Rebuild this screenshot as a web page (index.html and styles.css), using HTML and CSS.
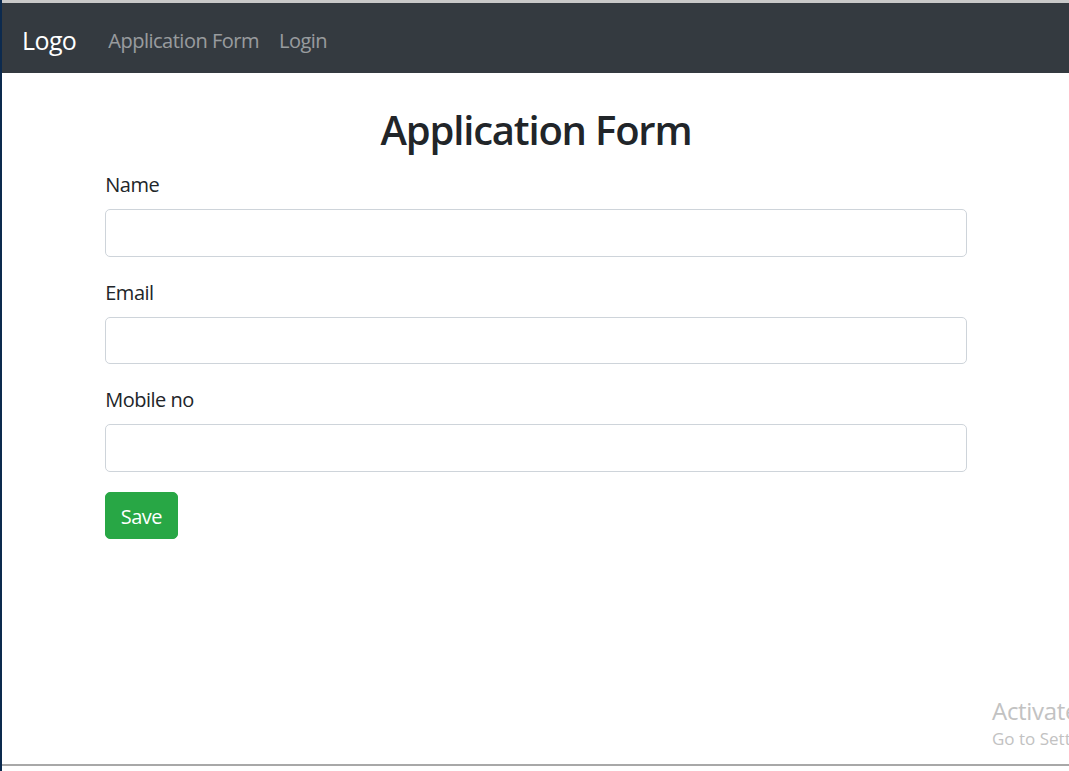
FILE: index.html
```html
<!DOCTYPE html>
<html lang="en">
<head>
<meta charset="utf-8">
<title>Application Form</title>
<link rel="stylesheet" href="styles.css">
</head>
<body>
<div class="screen">
  <div class="window">
    <nav class="navbar">
      <a class="brand" href="#">Logo</a>
      <a class="nav-link" href="#">Application Form</a>
      <a class="nav-link" href="#">Login</a>
    </nav>
    <main class="container">
      <h2 class="title">Application Form</h2>
      <form class="form">
        <div class="group">
          <label class="label" for="name">Name</label>
          <input class="input" id="name" type="text">
        </div>
        <div class="group">
          <label class="label" for="email">Email</label>
          <input class="input" id="email" type="email">
        </div>
        <div class="group">
          <label class="label" for="mobile">Mobile no</label>
          <input class="input" id="mobile" type="text">
        </div>
        <button class="btn-save" type="button">Save</button>
      </form>
    </main>
    <div class="watermark">
      <div class="wm-title">Activate Windows</div>
      <div class="wm-sub">Go to Settings to activate Windows.</div>
    </div>
  </div>
  <div class="taskbar-edge"></div>
</div>
</body>
</html>
```

FILE: styles.css
```css
* { box-sizing: border-box; }

html, body {
  margin: 0;
  height: 771px;
  overflow: hidden;
  background: #ffffff;
}

body {
  font-family: "Open Sans", "Noto Sans", sans-serif;
  color: #212529;
}

.screen {
  height: 771px;
  display: flex;
  flex-direction: column;
  border-left: 2px solid #0c2a4e;
}

.window {
  position: relative;
  flex: 1;
  overflow: hidden;
  border-top: 3px solid #c9c9c9;
  background: #ffffff;
}

.taskbar-edge {
  height: 7px;
  border-top: 2px solid #a8a8a8;
  background: #ffffff;
}

.navbar {
  height: 70px;
  background: #343a40;
  display: flex;
  align-items: center;
  padding: 4px 20px 0;
}

.brand {
  color: #ffffff;
  font-size: 25px;
  text-decoration: none;
  margin-right: 22px;
  letter-spacing: -0.6px;
}

.nav-link {
  color: rgba(255, 255, 255, 0.5);
  font-size: 20px;
  text-decoration: none;
  padding: 0 10px;
  letter-spacing: -0.5px;
}

.container {
  max-width: 900px;
  margin: 0 auto;
  padding: 0 18.75px 0 19.75px;
}

.title {
  margin: 33px 0 15px;
  font-size: 40px;
  line-height: 48px;
  font-weight: 600;
  text-align: center;
  letter-spacing: -1.2px;
}

.group {
  margin-bottom: 20px;
}

.label {
  display: block;
  font-size: 20px;
  line-height: 30px;
  padding-top: 1px;
  margin-bottom: 9px;
  letter-spacing: -0.5px;
}

.input {
  display: block;
  width: 100%;
  height: 47.5px;
  border: 1px solid #ced4da;
  border-radius: 5px;
  padding: 7.5px 15px;
  font: inherit;
  font-size: 20px;
  background: #ffffff;
}

.btn-save {
  display: inline-block;
  background: #28a745;
  border: 1px solid #28a745;
  color: #ffffff;
  border-radius: 5px;
  font-family: inherit;
  font-size: 20px;
  line-height: 30px;
  padding: 9px 14.5px 6px;
  letter-spacing: -0.5px;
}

.watermark {
  position: absolute;
  left: 990px;
  top: 692px;
  white-space: nowrap;
  color: #c2c2c2;
}

.wm-title {
  font-size: 24px;
  line-height: 32px;
  letter-spacing: -0.3px;
}

.wm-sub {
  font-size: 17px;
  line-height: 24px;
}
```
